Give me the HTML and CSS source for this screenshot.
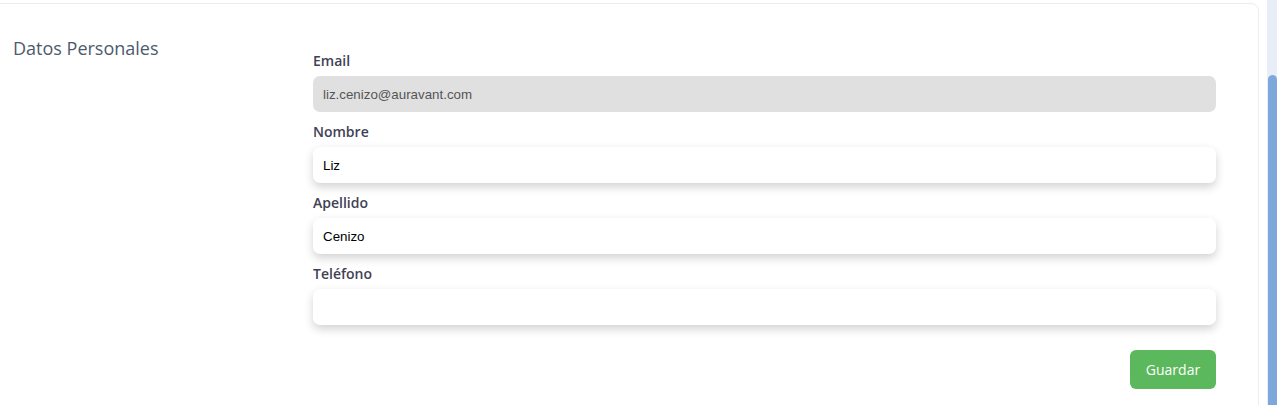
FILE: index.html
```html
<!DOCTYPE html>
<html lang="es">
<head>
<meta charset="utf-8">
<title>Datos Personales</title>
<link rel="stylesheet" href="styles.css">
</head>
<body>
<div class="page">
  <main class="main">
    <section class="card">
      <h2 class="section-title">Datos Personales</h2>
      <form class="form">
        <div class="group">
          <label class="label">Email</label>
          <input class="input input-disabled" type="text" value="liz.cenizo@auravant.com" disabled>
        </div>
        <div class="group">
          <label class="label">Nombre</label>
          <input class="input" type="text" value="Liz">
        </div>
        <div class="group">
          <label class="label">Apellido</label>
          <input class="input" type="text" value="Cenizo">
        </div>
        <div class="group">
          <label class="label">Teléfono</label>
          <input class="input" type="text" value="">
        </div>
        <div class="actions">
          <button type="button" class="btn-save">Guardar</button>
        </div>
      </form>
    </section>
  </main>
  <div class="scrolltrack"><div class="scrollthumb"></div></div>
</div>
</body>
</html>
```
FILE: styles.css
```css
html, body {
  margin: 0;
  padding: 0;
  height: 100%;
  overflow: hidden;
  background: #ffffff;
  font-family: "Open Sans", "Liberation Sans", sans-serif;
}
.page {
  display: flex;
  height: 405px;
}
.main {
  width: 1259px;
  padding-top: 3px;
  box-sizing: border-box;
}
.card {
  margin-left: -20px;
  width: 1279px;
  box-sizing: border-box;
  border: 1px solid #ebedf2;
  border-radius: 8px;
  padding: 30px 42px 60px 32px;
  display: grid;
  grid-template-columns: 300px 1fr;
  align-items: start;
}
.section-title {
  margin: 0;
  font-size: 18px;
  font-weight: 400;
  color: #4d5a6d;
  line-height: 26px;
  padding-top: 1px;
}
.form {
  display: flex;
  flex-direction: column;
  gap: 10px;
  padding-top: 17px;
}
.group {
  display: flex;
  flex-direction: column;
}
.label {
  font-size: 14px;
  font-weight: 600;
  color: #3f4254;
  line-height: 20px;
  margin-bottom: 5px;
}
.input {
  height: 36px;
  box-sizing: border-box;
  border: none;
  border-radius: 7px;
  background: #ffffff;
  padding: 0 10px;
  font-family: "Liberation Sans", Arial, sans-serif;
  font-size: 13.33px;
  color: #000000;
  box-shadow: 0 4px 10px rgba(0, 0, 0, 0.18);
  outline: none;
}
.input-disabled {
  background: #e0e0e0;
  color: #555555;
  box-shadow: none;
}
.actions {
  display: flex;
  justify-content: flex-end;
  padding-top: 15px;
}
.btn-save {
  width: 86px;
  height: 39px;
  border: none;
  border-radius: 6px;
  background: #5cb85c;
  color: #ffffff;
  font-family: "Open Sans", "Liberation Sans", sans-serif;
  font-size: 14px;
}
.scrolltrack {
  margin-left: 8px;
  width: 10px;
  background: #e8eef8;
  display: flex;
  flex-direction: column;
  padding-top: 75px;
  box-sizing: border-box;
}
.scrollthumb {
  flex: 1;
  background: #7ea7dc;
  border-radius: 5px 5px 0 0;
  margin-left: 1px;
}
```
